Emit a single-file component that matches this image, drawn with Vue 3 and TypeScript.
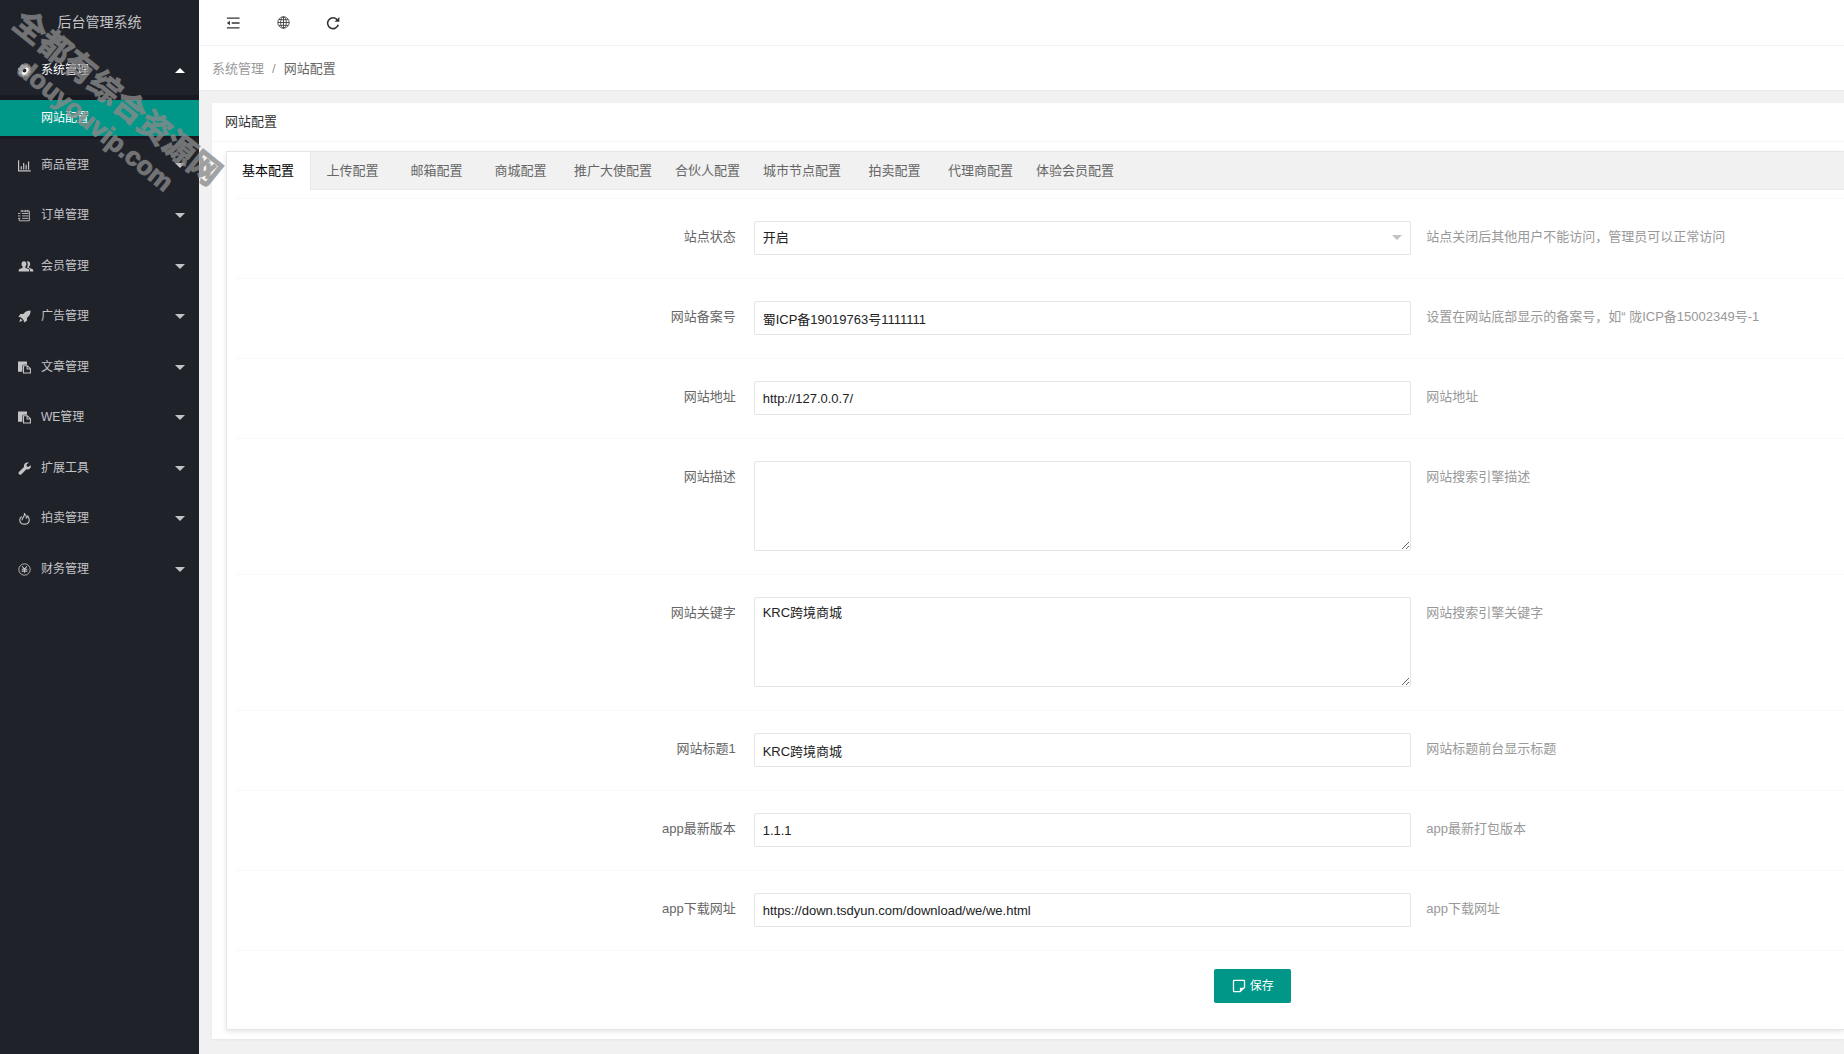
<script setup lang="ts">
import { ref } from 'vue'

interface MenuItem {
  label: string
  icon: string
}

interface Field {
  id: string
  label: string
  hint: string
  kind: 'select' | 'text' | 'area'
  value: string
}

const menu: MenuItem[] = [
  { label: '商品管理', icon: 'chart' },
  { label: '订单管理', icon: 'order' },
  { label: '会员管理', icon: 'users' },
  { label: '广告管理', icon: 'rocket' },
  { label: '文章管理', icon: 'paste' },
  { label: 'WE管理', icon: 'paste' },
  { label: '扩展工具', icon: 'wrench' },
  { label: '拍卖管理', icon: 'fire' },
  { label: '财务管理', icon: 'yen' },
]

const tabs: string[] = [
  '基本配置', '上传配置', '邮箱配置', '商城配置', '推广大使配置',
  '合伙人配置', '城市节点配置', '拍卖配置', '代理商配置', '体验会员配置',
]
const activeTab = ref(0)

const fields = ref<Field[]>([
  { id: 'status', label: '站点状态', kind: 'select', value: '开启', hint: '站点关闭后其他用户不能访问，管理员可以正常访问' },
  { id: 'icp', label: '网站备案号', kind: 'text', value: '蜀ICP备19019763号1111111', hint: '设置在网站底部显示的备案号，如“ 陇ICP备15002349号-1' },
  { id: 'url', label: '网站地址', kind: 'text', value: 'http://127.0.0.7/', hint: '网站地址' },
  { id: 'desc', label: '网站描述', kind: 'area', value: '', hint: '网站搜索引擎描述' },
  { id: 'keywords', label: '网站关键字', kind: 'area', value: 'KRC跨境商城', hint: '网站搜索引擎关键字' },
  { id: 'title', label: '网站标题1', kind: 'text', value: 'KRC跨境商城', hint: '网站标题前台显示标题' },
  { id: 'version', label: 'app最新版本', kind: 'text', value: '1.1.1', hint: 'app最新打包版本' },
  { id: 'download', label: 'app下载网址', kind: 'text', value: 'https://down.tsdyun.com/download/we/we.html', hint: 'app下载网址' },
])
</script>

<template>
  <div class="layout">
    <aside class="side">
      <div class="logo">后台管理系统</div>
      <nav>
        <a class="item open" href="#">
          <svg class="icon" viewBox="0 0 16 16"><circle cx="8" cy="8" r="4.6" fill="none" stroke="currentColor" stroke-width="4.4" /><circle cx="8" cy="8" r="7" fill="none" stroke="currentColor" stroke-width="1.6" stroke-dasharray="3 2.5" /></svg>
          <span>系统管理</span>
          <i class="caret up"></i>
        </a>
        <div class="sub"><a class="current" href="#">网站配置</a></div>
        <div class="group">
          <a v-for="m in menu" :key="m.label" class="item" href="#">
            <svg v-if="m.icon === 'chart'" class="icon" viewBox="0 0 16 16"><path d="M.7 1.500v13h15M4 13V9M7 13V5M10 13V7M13 13V3" fill="none" stroke="currentColor" stroke-width="1.500" /></svg>
            <svg v-else-if="m.icon === 'order'" class="icon" viewBox="0 0 16 16"><path d="M3 2.500h11v12H1.500v-3M5 5.500h8M5 8.500h8M5 11.500h8M5 1v3M9 1v3M12 1v3M0 5.500h3M0 8.500h3M0 11.500h3" fill="none" stroke="currentColor" stroke-width="1.100" /></svg>
            <svg v-else-if="m.icon === 'users'" class="icon wide" viewBox="0 0 18 16"><path d="M6.500 1.500c2 0 3 1.500 3 3.500 0 1.400-.6 2.600-1.400 3.300v1.200l3.900 1.700c.7.400 1 1.100 1 2.800H0c0-1.700.3-2.400 1-2.800l3.900-1.700V8.300C4.100 7.600 3.500 6.400 3.500 5c0-2 1-3.500 3-3.500z" fill="currentColor" /><path d="M10 1.700c.4-.1.700-.2 1.200-.2 1.900 0 2.900 1.400 2.900 3.300 0 1.500-.6 2.600-1.400 3.300v1.300l4 1.800c.8.400 1.300 1 1.300 2.800h-4c0-2.200-.6-3.200-1.700-3.700L10 9.200c.7-.9 1.200-2 1.200-4.100 0-1.400-.4-2.600-1.200-3.400z" fill="currentColor" /></svg>
            <svg v-else-if="m.icon === 'rocket'" class="icon" viewBox="0 0 16 16"><path d="M15.500.5c-4 0-6.700 1.300-9 4.300L2.900 5 .5 8.700l3 .3 3.500 3.500.4 3 3.600-2.400.2-3.600c3-2.300 4.300-5 4.300-9z" fill="currentColor" /><path d="M3 10.500l2.500 2.500-4 2z" fill="currentColor" /></svg>
            <svg v-else-if="m.icon === 'paste'" class="icon" viewBox="0 0 16 16"><path d="M0 .7h11v4H7c-1 0-1.600.6-1.600 1.600v7H0z" fill="currentColor" /><path d="M6.800 5.800h4.700l3.800 3.700v5.300H6.800zM11.200 6v3.800h4" fill="none" stroke="currentColor" stroke-width="1.300" /></svg>
            <svg v-else-if="m.icon === 'wrench'" class="icon" viewBox="0 0 16 16"><path d="M15.700 4c.6 2.600-1 5.200-4 5.200-.5 0-1-.1-1.400-.2l-6 6c-1 1-2.300 1-3.100.2-.9-.9-.8-2.200.2-3.200l6-6C6.700 3.200 8.600.5 11.500.5c.7 0 1.400.1 2 .4l-2.900 2v2.200l1.900 1.100z" fill="currentColor" /></svg>
            <svg v-else-if="m.icon === 'fire'" class="icon" viewBox="0 0 16 16"><path d="M4.500 5.500C3 6.600 2.200 8 2.200 9.800c0 3.100 2.400 5.200 5.800 5.200s5.800-2.100 5.800-5.200c0-1.900-.6-3.100-1.300-4.300M5 10c0-3 3.200-4 3-8 1.800 1.400 2.600 3 2.300 5.500 1.200-.6 1.700-1.700 1.800-3.500" fill="none" stroke="currentColor" stroke-width="1.400" /></svg>
            <svg v-else class="icon" viewBox="0 0 16 16"><circle cx="8" cy="8" r="7" fill="none" stroke="currentColor" stroke-width="1.100" /><path d="M5 4l3 3.500L11 4M8 7.500V12M4.500 7.800h7M4.500 10h7" fill="none" stroke="currentColor" stroke-width="1.300" /></svg>
            <span>{{ m.label }}</span>
            <i class="caret"></i>
          </a>
        </div>
      </nav>
    </aside>

    <main class="main">
      <header class="topbar">
        <button type="button" aria-label="收起菜单"><svg viewBox="0 0 16 16"><path d="M1 2.500h14.500M6.500 8h9M1 13.500h14.500" fill="none" stroke="currentColor" stroke-width="1.500" /><path d="M1 8l3.500-2.500v5z" fill="currentColor" /></svg></button>
        <button type="button" aria-label="网站首页"><svg class="globe" viewBox="0 0 16 16"><g fill="none" stroke="currentColor" stroke-width="1"><circle cx="8" cy="8" r="7" /><ellipse cx="8" cy="8" rx="3.500" ry="7" /><path d="M1 8h14M2.300 4.500h11.400M2.300 11.500h11.400M8 1v14" /></g></svg></button>
        <button type="button" aria-label="刷新"><svg viewBox="0 0 16 16"><path d="M13 4.500A6.200 6.200 0 1 0 14 10" fill="none" stroke="currentColor" stroke-width="1.800" /><path d="M15.300 1v5.500H9.800z" fill="currentColor" /></svg></button>
      </header>
      <div class="crumbs"><a href="#">系统管理</a><span class="slash">/</span><span>网站配置</span></div>

      <section class="card">
        <h1>网站配置</h1>
        <div class="card-body">
          <div class="tabbox">
            <div class="tabs" role="tablist">
              <button
                v-for="(t, i) in tabs"
                :key="t"
                type="button"
                role="tab"
                :aria-selected="i === activeTab"
                :class="{ active: i === activeTab }"
                @click="activeTab = i"
              >{{ t }}</button>
            </div>
            <form class="form" @submit.prevent>
              <div v-for="f in fields" :key="f.id" class="row">
                <label :for="f.id">{{ f.label }}</label>
                <div v-if="f.kind === 'select'" class="select">
                  <select :id="f.id" v-model="f.value">
                    <option>开启</option>
                    <option>关闭</option>
                  </select>
                  <i class="arrow"></i>
                </div>
                <textarea v-else-if="f.kind === 'area'" :id="f.id" v-model="f.value"></textarea>
                <input v-else :id="f.id" v-model="f.value" type="text" />
                <p>{{ f.hint }}</p>
              </div>
              <div class="actions">
                <button type="submit">
                  <svg viewBox="0 0 16 16"><path d="M2.500 1.500h11q.8 0 .8.800v7.400l-5 4.800H2.500q-.8 0-.8-.8V2.300q0-.8.800-.8z" fill="none" stroke="currentColor" stroke-width="1.500" /><path d="M9 14.500V10h5.300z" fill="currentColor" /></svg>
                  <span>保存</span>
                </button>
              </div>
            </form>
          </div>
        </div>
      </section>
    </main>

    <div class="watermark" aria-hidden="true">
      <div class="wm-name">全都有综合资源网</div>
      <div class="wm-site">douyouvip.com</div>
    </div>
  </div>
</template>

<style>
body {
  background: #f1f1f1;
}
</style>

<style scoped>
.layout {
  position: relative;
  display: flex;
  min-height: 100vh;
  overflow: hidden;
  font: 13px/20px "Liberation Sans", "Noto Sans CJK SC", sans-serif;
  color: #333;
}
.layout * {
  box-sizing: border-box;
}
a {
  color: inherit;
  text-decoration: none;
}
button,
input,
select,
textarea {
  font: inherit;
}

/* sidebar */
.side {
  flex: none;
  width: 199px;
  background: #20222a;
  color: #c3c4c6;
  font-size: 12px;
}
.logo {
  height: 45px;
  line-height: 44px;
  text-align: center;
  font-size: 14px;
}
.item {
  display: flex;
  align-items: center;
  height: 50px;
  padding: 0 14px 0 18px;
}
.item.open {
  color: #fff;
}
.group {
  padding-top: 1px;
}
.group .item:nth-child(even) {
  margin-bottom: 1px;
}
.icon {
  flex: none;
  width: 13px;
  height: 13px;
  margin-right: 10px;
}
.icon.wide {
  width: 16px;
  margin-right: 7px;
}
.item span {
  flex: 1;
}
.caret {
  border: 5px solid transparent;
  border-top: 5px solid currentColor;
  border-bottom: 0;
}
.caret.up {
  border-top: 0;
  border-bottom: 5px solid currentColor;
}
.sub {
  padding: 5px 0 3px;
  background: #191a21;
}
.current {
  display: block;
  height: 36px;
  padding-left: 41px;
  line-height: 36px;
  background: #009688;
  color: #fff;
}

/* top */
.main {
  flex: 1;
  min-width: 0;
}
.topbar {
  display: flex;
  height: 46px;
  padding-left: 9px;
  background: #fff;
  border-bottom: 1px solid #f2f2f2;
}
.topbar button {
  display: grid;
  place-items: center;
  width: 50px;
  padding: 0;
  border: 0;
  background: none;
  color: #333;
}
.topbar svg {
  width: 14px;
  height: 14px;
}
.topbar .globe {
  width: 13px;
  height: 13px;
}
.crumbs {
  display: flex;
  height: 45px;
  padding-left: 13px;
  line-height: 45px;
  background: #fff;
  border-bottom: 1px solid #e8e8e8;
  color: #666;
}
.crumbs a,
.slash {
  color: #999;
}
.slash {
  margin: 0 8px;
}

/* card */
.card {
  margin: 12px 0 14px 13px;
  background: #fff;
  box-shadow: 0 1px 2px rgba(0, 0, 0, 0.05);
}
.card h1 {
  height: 39px;
  margin: 0;
  padding-left: 13px;
  border-bottom: 1px solid #f6f6f6;
  font-size: 13px;
  font-weight: 400;
  line-height: 38px;
}
.card-body {
  padding: 9px 0 9px 14px;
}
.tabbox {
  border: 1px solid #e6e6e6;
  border-right: 0;
  box-shadow: 0 2px 5px rgba(0, 0, 0, 0.1);
}
.tabs {
  display: flex;
  height: 38px;
  background: #f1f1f1;
  border-bottom: 1px solid #e9e9e9;
}
.tabs button {
  flex: none;
  min-width: 84px;
  height: 38px;
  padding: 0 12px 0 11px;
  border: 0;
  background: none;
  color: #666;
  line-height: 36px;
}
.tabs .active {
  background: #fff;
  border-right: 1px solid #e6e6e6;
  color: #000;
}

/* form */
.form {
  margin: 8px 0 0 9px;
  border-top: 1px solid #f8f8f8;
}
.row {
  display: grid;
  grid-template-columns: minmax(0, 503fr) minmax(0, 658fr) minmax(0, 418fr);
  column-gap: 15px;
  padding: 22px 0 23px;
  border-bottom: 1px solid #f8f8f8;
}
.row label {
  padding-right: 3px;
  text-align: right;
  line-height: 32px;
  color: #666;
}
.row p {
  margin: 0;
  line-height: 32px;
  color: #999;
  white-space: nowrap;
}
.row input,
.row select,
.row textarea {
  display: block;
  width: 100%;
  height: 34px;
  margin: 0;
  padding: 0 8px;
  border: 1px solid #e6e6e6;
  border-radius: 2px;
  background: #fff;
  color: #222;
  outline: 0;
}
.row textarea {
  height: 90px;
  padding: 5px 8px;
  resize: vertical;
}
.row select {
  appearance: none;
}
.select {
  position: relative;
}
.arrow {
  position: absolute;
  top: 14px;
  right: 9px;
  border: 5px solid transparent;
  border-top-color: #c2c2c2;
  border-bottom: 0;
  pointer-events: none;
}
.actions {
  display: grid;
  grid-template-columns: 979fr auto 553fr;
  padding: 18px 0 26px;
}
.actions button {
  grid-column: 2;
  display: flex;
  align-items: center;
  justify-content: center;
  gap: 4px;
  width: 77px;
  height: 34px;
  padding: 0;
  border: 0;
  border-radius: 2px;
  background: #009688;
  color: #fff;
  font-size: 12px;
}
.actions svg {
  width: 14px;
  height: 16px;
}

/* diagonal site mark laid over the sidebar */
.watermark {
  position: absolute;
  top: 77px;
  left: -34px;
  width: 280px;
  transform: rotate(39deg);
  text-align: center;
  font-weight: 700;
  line-height: 35px;
  white-space: nowrap;
  color: #8a8a8a;
  -webkit-text-stroke: 1px #8a8a8a;
  opacity: 0.78;
  pointer-events: none;
}
.wm-name {
  font-size: 32px;
}
.wm-site {
  font-size: 26px;
}
</style>
